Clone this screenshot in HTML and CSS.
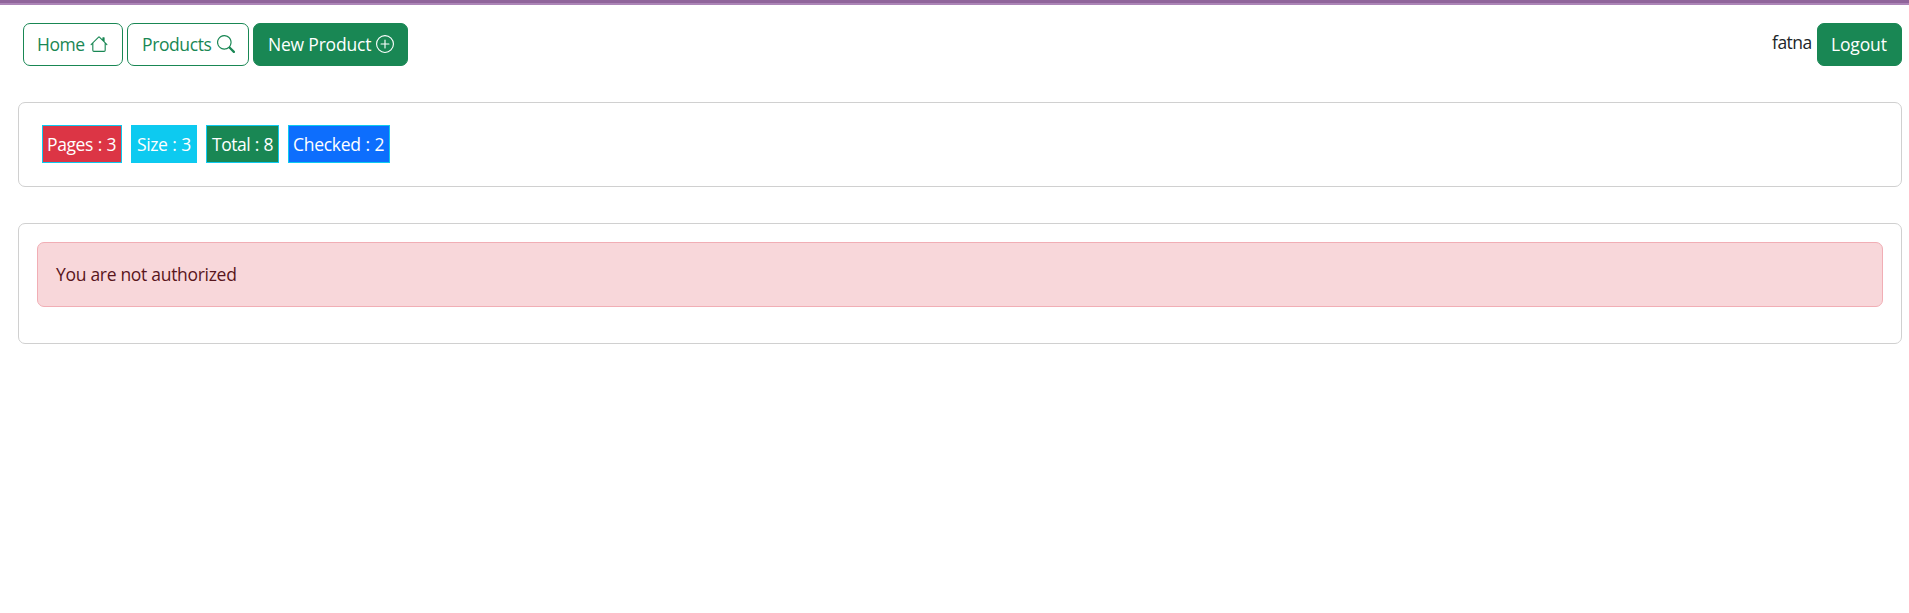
FILE: index.html
```
<!DOCTYPE html>
<html lang="en">
<head>
<meta charset="utf-8">
<title>Products</title>
<link rel="stylesheet" href="styles.css">
</head>
<body>
<div class="topline"></div>
<nav class="navbar">
  <a class="btn btn-outline home"><span class="label">Home</span>
    <svg class="icon" viewBox="0 0 16 16"><path d="M8.707 1.5a1 1 0 0 0-1.414 0L.646 8.146a.5.5 0 0 0 .708.708L2 8.207V13.5A1.5 1.5 0 0 0 3.5 15h9a1.5 1.5 0 0 0 1.5-1.5V8.207l.646.647a.5.5 0 0 0 .708-.708L13 5.793V2.5a.5.5 0 0 0-.5-.5h-1a.5.5 0 0 0-.5.5v1.293L8.707 1.5ZM13 7.207V13.5a.5.5 0 0 1-.5.5h-9a.5.5 0 0 1-.5-.5V7.207l5-5 5 5Z"/></svg></a>
  <a class="btn btn-outline products"><span class="label">Products</span>
    <svg class="icon" viewBox="0 0 16 16"><path d="M11.742 10.344a6.5 6.5 0 1 0-1.397 1.398h-.001c.03.04.062.078.098.115l3.85 3.85a1 1 0 0 0 1.415-1.414l-3.85-3.85a1.007 1.007 0 0 0-.115-.1zM12 6.5a5.5 5.5 0 1 1-11 0 5.5 5.5 0 0 1 11 0z"/></svg></a>
  <a class="btn btn-solid new"><span class="label">New Product</span>
    <svg class="icon" viewBox="0 0 16 16"><path d="M8 15A7 7 0 1 1 8 1a7 7 0 0 1 0 14zm0 1A8 8 0 1 0 8 0a8 8 0 0 0 0 16z"/><path d="M8 4a.5.5 0 0 1 .5.5v3h3a.5.5 0 0 1 0 1h-3v3a.5.5 0 0 1-1 0v-3h-3a.5.5 0 0 1 0-1h3v-3A.5.5 0 0 1 8 4z"/></svg></a>
  <span class="user">fatna</span>
  <a class="btn btn-solid logout"><span class="label">Logout</span></a>
</nav>
<section class="card stats">
  <span class="stat pages">Pages : 3</span>
  <span class="stat size">Size : 3</span>
  <span class="stat total">Total : 8</span>
  <span class="stat checked">Checked : 2</span>
</section>
<section class="card content">
  <div class="alert">You are not authorized</div>
</section>
</body>
</html>
```
FILE: styles.css
```
* { box-sizing: border-box; }
body {
  margin: 0;
  background: #fff;
  color: #212529;
  font: 17.5px/27px "Open Sans", "Noto Sans", sans-serif;
  white-space: nowrap;
}
.topline { height: 5px; background: #90659b; border-bottom: 2px solid #ac85b7; }
.navbar { display: flex; gap: 4px; height: 61px; padding: 18px 7px 0 23px; }
.btn {
  display: flex;
  align-items: center;
  justify-content: space-between;
  height: 43px;
  padding: 0 13px;
  border: 1px solid #198754;
  border-radius: 7px;
}
.btn-outline { color: #198754; }
.btn-solid { color: #fff; background: #198754; }
.icon { width: 18px; height: 18px; margin-top: -1px; fill: currentColor; flex: none; }
.home { width: 100px; padding-right: 14px; letter-spacing: -0.5px; }
.products { width: 122px; padding-left: 14px; letter-spacing: -0.4px; }
.new { width: 155px; padding-left: 14px; letter-spacing: -0.2px; }
.user { margin-left: auto; padding-top: 6px; width: 41px; letter-spacing: -0.5px; }
.logout { width: 85px; letter-spacing: -0.15px; }
.card { margin: 36px 7px 0 18px; border: 1px solid #d0d0d0; border-radius: 7px; }
.stats { display: flex; gap: 9px; height: 85px; padding: 22px 23px; }
.stat {
  height: 38px;
  padding: 5px 0 0 4px;
  border: 1px solid #0dcaf0;
  color: #fff;
  letter-spacing: -0.4px;
  word-spacing: 0.6px;
}
.pages { width: 80px; background: #dc3545; }
.size { width: 66px; padding-left: 5px; background: #0dcaf0; }
.total { width: 73px; padding-left: 5px; background: #198754; letter-spacing: -0.5px; }
.checked { width: 102px; background: #0d6efd; letter-spacing: -0.3px; }
.content { height: 121px; padding: 18px; }
.alert {
  height: 65px;
  padding: 18px;
  background: #f8d7da;
  border: 1px solid #f1aeb5;
  border-radius: 7px;
  color: #58151c;
  letter-spacing: -0.3px;
}
```
